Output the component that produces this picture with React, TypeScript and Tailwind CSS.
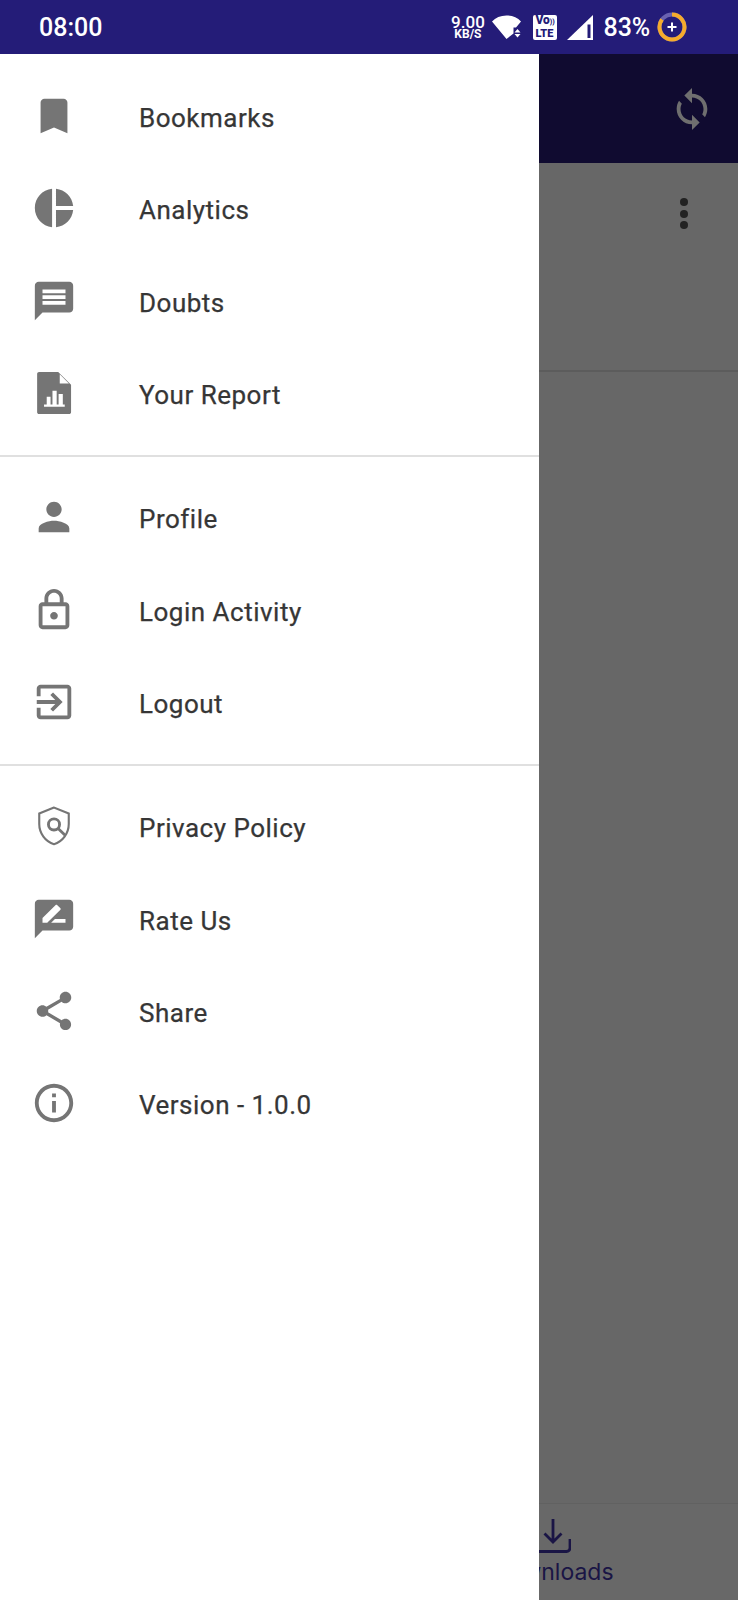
import { type ReactNode } from "react";

// material icon paths, all on a 24 unit box
const ICONS: Record<string, ReactNode> = {
  bookmark: <path d="M17 3H7c-1.1 0-2 .9-2 2v16l7-3 7 3V5c0-1.1-.9-2-2-2z" />,
  analytics: (
    <path d="M11 2v20c-5.07-.5-9-4.79-9-10s3.93-9.5 9-10zm2.03 0v8.99H22c-.47-4.74-4.24-8.52-8.97-8.99zm0 11.01V22c4.74-.47 8.5-4.25 8.97-8.99h-8.97z" />
  ),
  message: (
    <path d="M20 2H4c-1.1 0-1.99.9-1.99 2L2 22l4-4h14c1.1 0 2-.9 2-2V4c0-1.1-.9-2-2-2zm-2 12H6v-2h12v2zm0-3H6V9h12v2zm0-3H6V6h12v2z" />
  ),
  report: (
    <path
      fillRule="evenodd"
      d="M4.200 1H14.200L20.900 7.700V22c0 .55-.45 1-1 1H4.200c-.55 0-1-.45-1-1V2c0-.55.45-1 1-1zM15 2.200V7h4.800zM6.800 18v1.200h10.800V18h-1V12.500h-2.200V18h-1V10.800h-2.200V18h-1V14H8.200V18z"
    />
  ),
  person: (
    <path d="M12 12c2.21 0 4-1.79 4-4s-1.79-4-4-4-4 1.79-4 4 1.79 4 4 4zm0 2c-2.67 0-8 1.34-8 4v2h16v-2c0-2.66-5.33-4-8-4z" />
  ),
  lock: (
    <path d="M18 8h-1V6c0-2.76-2.24-5-5-5S7 3.24 7 6v2H6c-1.1 0-2 .9-2 2v10c0 1.1.9 2 2 2h12c1.1 0 2-.9 2-2V10c0-1.1-.9-2-2-2zm-9-2c0-1.66 1.34-3 3-3s3 1.34 3 3v2H9V6zm9 14H6V10h12v10zm-6-3c1.1 0 2-.9 2-2s-.9-2-2-2-2 .9-2 2 .9 2 2 2z" />
  ),
  logout: (
    <path d="M10.09 15.59L11.5 17l5-5-5-5-1.41 1.41L12.67 11H3v2h9.67l-2.58 2.59zM19 3H5c-1.11 0-2 .9-2 2v4h2V5h14v14H5v-4H3v4c0 1.1.89 2 2 2h14c1.1 0 2-.9 2-2V5c0-1.1-.9-2-2-2z" />
  ),
  policy: (
    <g fill="none" stroke="currentColor">
      <path strokeWidth="1.1" d="M12 2.400L4.300 5.500V11c0 4.800 3.200 9.300 7.700 10.500 4.500-1.200 7.700-5.700 7.700-10.500V5.500z" />
      <circle cx="12" cy="11.200" r="2.900" strokeWidth="1.500" />
      <path strokeWidth="1.500" d="M14 13.200l3.800 3.600" />
    </g>
  ),
  rate: (
    <path d="M20 2H4c-1.1 0-1.99.9-1.99 2L2 22l4-4h14c1.1 0 2-.9 2-2V4c0-1.1-.9-2-2-2zM6 14v-2.47l6.88-6.88c.2-.2.51-.2.71 0l1.77 1.77c.2.2.2.51 0 .71L8.47 14H6zm12 0h-7.500l2-2H18v2z" />
  ),
  share: (
    <path d="M18 16.080c-.76 0-1.44.3-1.96.77L8.91 12.700c.05-.23.09-.46.09-.7s-.04-.47-.09-.7l7.05-4.11c.54.5 1.25.81 2.04.81 1.66 0 3-1.34 3-3s-1.34-3-3-3-3 1.34-3 3c0 .24.04.47.09.7L8.04 9.81C7.5 9.31 6.79 9 6 9c-1.66 0-3 1.34-3 3s1.34 3 3 3c.79 0 1.5-.31 2.04-.81l7.12 4.16c-.05.21-.08.43-.08.65 0 1.61 1.31 2.92 2.92 2.92 1.61 0 2.92-1.31 2.92-2.92s-1.31-2.92-2.92-2.92z" />
  ),
  info: (
    <path d="M11 7h2v2h-2zm0 4h2v6h-2zm1-9C6.48 2 2 6.48 2 12s4.48 10 10 10 10-4.48 10-10S17.52 2 12 2zm0 18c-4.41 0-8-3.59-8-8s3.59-8 8-8 8 3.59 8 8-3.59 8-8 8z" />
  ),
};

const GROUPS = [
  [
    { icon: "bookmark", label: "Bookmarks" },
    { icon: "analytics", label: "Analytics" },
    { icon: "message", label: "Doubts" },
    { icon: "report", label: "Your Report" },
  ],
  [
    { icon: "person", label: "Profile" },
    { icon: "lock", label: "Login Activity" },
    { icon: "logout", label: "Logout" },
  ],
  [
    { icon: "policy", label: "Privacy Policy" },
    { icon: "rate", label: "Rate Us" },
    { icon: "share", label: "Share" },
    { icon: "info", label: "Version - 1.0.0" },
  ],
];

const DrawerRow = ({ icon, label }: { icon: string; label: string }) => (
  <div className="flex h-[92.33px] items-center pl-[31px]">
    <svg viewBox="0 0 24 24" fill="currentColor" className="h-[46px] w-[46px] shrink-0 text-[#757575]">
      {ICONS[icon]}
    </svg>
    <span className="ml-[62px] translate-y-[2px] font-['Roboto',sans-serif] text-[26px] font-normal leading-none tracking-[0.5px] text-[#363636] [-webkit-text-stroke:0.25px_#363636]">
      {label}
    </span>
  </div>
);

const StatusBar = () => (
  <div className="flex h-[54px] shrink-0 items-center bg-[#241c78] text-white">
    {/* Clock */}
    <span className="ml-[39px] font-['Roboto',sans-serif] text-[25px] font-medium leading-none">08:00</span>

    {/* Network speed */}
    <div className="ml-[347px] flex w-[37px] flex-col items-center font-['Roboto',sans-serif] font-medium">
      <span className="text-[17px] leading-[14px]">9.00</span>
      <span className="text-[12px] font-bold leading-[11px]">KB/S</span>
    </div>

    {/* Wifi */}
    <svg viewBox="0 0 30 24" fill="white" className="ml-[6px] h-[24px] w-[30px]">
      <path d="M0 6.500C3.500 2.500 8.500 0.500 14.500 0.500S25.500 2.500 29 6.500L24 12.500H21.500V18.500L14.500 24z" />
      <path d="M25.500 14l3 3.500h-6zM22.500 19h6l-3 3.500z" />
    </svg>

    {/* VoLTE */}
    <div className="ml-[11px] flex h-[25px] w-[24px] flex-col justify-center rounded-[2px] bg-white pl-[2px] font-['Roboto',sans-serif] text-[#241c78]">
      <span className="text-[12px] font-black leading-[11px]">
        Vo<span className="text-[7px]">))</span>
      </span>
      <span className="text-[11px] font-black leading-[11px]">LTE</span>
    </div>

    {/* Signal */}
    <svg viewBox="0 0 26 25" className="ml-[10px] h-[25px] w-[26px]">
      <path d="M26 0V25H0z" fill="white" />
      <path d="M20.500 9.500h3V23h-3z" fill="#241c78" />
    </svg>

    {/* Battery */}
    <span className="ml-[10px] font-['Roboto',sans-serif] text-[25px] font-medium leading-none">83%</span>
    <svg viewBox="0 0 30 30" className="ml-[7px] h-[30px] w-[30px]">
      <circle cx="15" cy="15" r="12.500" fill="none" stroke="#6a62b0" strokeWidth="4" />
      <path d="M15 2.500A12.500 12.500 0 1 1 5 7.500" fill="none" stroke="#f5ab2c" strokeWidth="4" />
      <path d="M14 10.500h2V14h3.500v2H16v3.500h-2V16h-3.500v-2H14z" fill="white" />
    </svg>
  </div>
);

const BehindDrawer = () => (
  <div className="flex min-w-0 flex-1 flex-col overflow-hidden bg-[#676767]">
    {/* Toolbar */}
    <div className="flex h-[109px] shrink-0 items-center justify-end bg-[#100b30] pr-[23px]">
      <svg viewBox="0 0 24 24" fill="#6f6f6f" className="h-[46px] w-[46px]">
        <path d="M12 4V1L8 5l4 4V6c3.31 0 6 2.69 6 6 0 1.01-.25 1.97-.7 2.8l1.46 1.46C19.54 15.03 20 13.57 20 12c0-4.42-3.58-8-8-8zm0 14c-3.31 0-6-2.69-6-6 0-1.01.25-1.97.7-2.8L5.24 7.74C4.46 8.97 4 10.43 4 12c0 4.42 3.58 8 8 8v3l4-4-4-4v3z" />
      </svg>
    </div>

    {/* Card with overflow menu */}
    <div className="flex h-[209px] shrink-0 flex-col items-end border-b-2 border-[#5c5c5c] pr-[50px] pt-[35px]">
      <div className="flex flex-col gap-[3.5px]">
        <span className="h-[8px] w-[8px] rounded-full bg-[#222222]" />
        <span className="h-[8px] w-[8px] rounded-full bg-[#222222]" />
        <span className="h-[8px] w-[8px] rounded-full bg-[#222222]" />
      </div>
    </div>

    <div className="flex-1" />

    {/* Bottom nav, mostly under the drawer */}
    <div className="h-[97px] shrink-0 border-t border-[#616161] bg-[#686868] pt-[14px]">
      <div className="ml-[-45px] flex w-[118px] flex-col items-center text-[#1a1545]">
        <svg viewBox="0 0 36 36" fill="none" stroke="currentColor" strokeWidth="2.8" className="h-[36px] w-[36px]">
          <path d="M18 1v23M9.500 15.500L18 24l8.500-8.500" />
          <path d="M35 21v9c0 2-1.500 3.500-3.500 3.500H4c-2 0-3.500-1.500-3.500-3.500" />
        </svg>
        <span className="mt-[7px] whitespace-nowrap font-['Inter',sans-serif] text-[23px] leading-none">Downloads</span>
      </div>
    </div>
  </div>
);

export default function App() {
  return (
    <div className="flex h-[1600px] w-[738px] flex-col overflow-hidden bg-[#676767]">
      <StatusBar />
      <div className="flex min-h-0 flex-1">
        {/* Drawer */}
        <div className="w-[539px] shrink-0 bg-white">
          <div className="border-b-2 border-[#e0e0e0] pb-[16px] pt-[16px]">
            {GROUPS[0].map((item) => (
              <DrawerRow key={item.label} {...item} />
            ))}
          </div>
          <div className="border-b-2 border-[#e0e0e0] pb-[16px] pt-[14px]">
            {GROUPS[1].map((item) => (
              <DrawerRow key={item.label} {...item} />
            ))}
          </div>
          <div className="pt-[14px]">
            {GROUPS[2].map((item) => (
              <DrawerRow key={item.label} {...item} />
            ))}
          </div>
        </div>
        <BehindDrawer />
      </div>
    </div>
  );
}
